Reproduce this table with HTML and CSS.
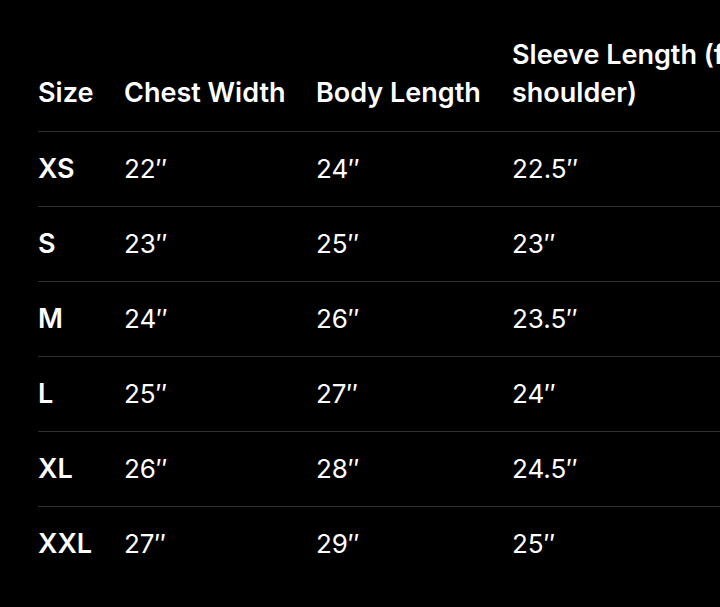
FILE: index.html
```html
<!DOCTYPE html>
<html lang="en">
<head>
<meta charset="utf-8">
<title>Size Chart</title>
<link rel="stylesheet" href="styles.css">
</head>
<body>
<div class="wrap">
<table class="chart">
  <colgroup>
    <col class="c-size"><col class="c-chest"><col class="c-body"><col class="c-sleeve">
  </colgroup>
  <thead>
    <tr><th>Size</th><th>Chest Width</th><th>Body Length</th><th>Sleeve Length (from shoulder)</th></tr>
  </thead>
  <tbody>
    <tr><th>XS</th><td>22″</td><td>24″</td><td>22.5″</td></tr>
    <tr><th>S</th><td>23″</td><td>25″</td><td>23″</td></tr>
    <tr><th>M</th><td>24″</td><td>26″</td><td>23.5″</td></tr>
    <tr><th>L</th><td>25″</td><td>27″</td><td>24″</td></tr>
    <tr><th>XL</th><td>26″</td><td>28″</td><td>24.5″</td></tr>
    <tr><th>XXL</th><td>27″</td><td>29″</td><td>25″</td></tr>
  </tbody>
</table>
</div>
</body>
</html>
```
FILE: styles.css
```css
html, body {
  margin: 0;
  background: #000;
  overflow: hidden;
}
.wrap {
  padding: 18px 0 0 38px;
  width: 900px;
}
.chart {
  border-collapse: collapse;
  table-layout: fixed;
  width: 780px;
  color: #fff;
  font-family: Inter, "Noto Sans", sans-serif;
  font-size: 26px;
  line-height: 38px;
}
.c-size { width: 86px; }
.c-chest { width: 192px; }
.c-body { width: 196px; }
.c-sleeve { width: 306px; }
.chart th, .chart td {
  text-align: left;
  padding: 18px 0;
  vertical-align: middle;
}
.chart thead th {
  vertical-align: bottom;
  padding-bottom: 19px;
  font-weight: 600;
  font-size: 27px;
}
.chart tbody th { font-weight: 600; font-size: 27px; }
.chart td { font-weight: 400; }
.chart tbody tr { border-top: 1px solid #2e2e30; }
```
